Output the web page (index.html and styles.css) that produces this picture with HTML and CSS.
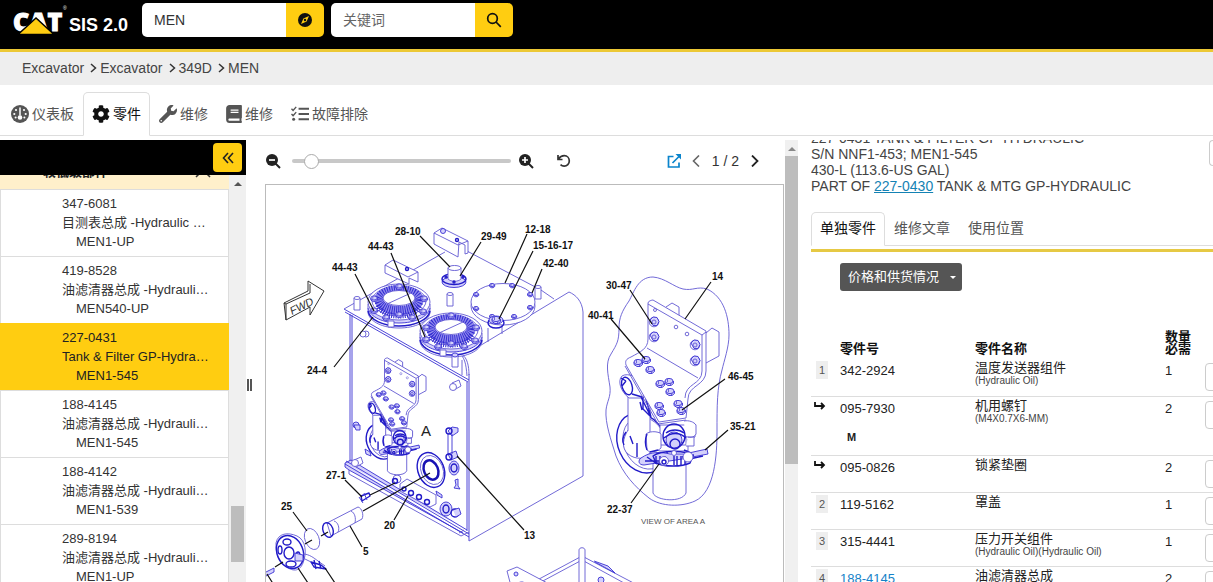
FILE: index.html
```html
<!DOCTYPE html>
<html lang="zh-CN">
<head>
<meta charset="utf-8">
<meta name="viewport" content="width=device-width, initial-scale=1">
<title>SIS 2.0</title>
<link rel="stylesheet" href="styles.css">
</head>
<body>
<header class="topbar">
  <a class="brand" href="#">
    <svg class="logo" viewBox="0 0 56 32" role="img" aria-label="CAT">
      <text class="logo-letters" x="0" y="27">CAT</text>
      <path d="M5 30.500 23 14 41 30.500Z" fill="#ffcd11" stroke="#000" stroke-width="1.500"/>
      <text class="reg" x="50" y="6">®</text>
    </svg>
    <span class="brand-name">SIS 2.0</span>
  </a>
  <form class="search">
    <input type="text" aria-label="序列号" value="MEN">
    <button type="button" aria-label="浏览"><svg width="16" height="16" viewBox="0 0 16 16"><circle cx="8" cy="8" r="7" fill="#111"/><path d="M12 4 9.600 9.600 4 12l2.400-5.600Z" fill="#ffcd11"/><circle cx="8" cy="8" r="1.200" fill="#111"/></svg></button>
  </form>
  <form class="search">
    <input type="text" aria-label="关键词" placeholder="关键词">
    <button type="button" aria-label="搜索"><svg width="16" height="16" viewBox="0 0 16 16" fill="none" stroke="#111" stroke-width="1.700"><circle cx="6.500" cy="6.500" r="4.800"/><path d="m10 10 4.800 4.800"/></svg></button>
  </form>
</header>

<nav class="crumbs" aria-label="路径">
  <a href="#">Excavator</a><svg class="sep" viewBox="0 0 7 10"><path d="m1 1 4.500 4L1 9"/></svg>
  <a href="#">Excavator</a><svg class="sep" viewBox="0 0 7 10"><path d="m1 1 4.500 4L1 9"/></svg>
  <a href="#">349D</a><svg class="sep" viewBox="0 0 7 10"><path d="m1 1 4.500 4L1 9"/></svg>
  <a href="#">MEN</a>
</nav>

<nav class="tabs main-tabs">
  <a class="tab" href="#"><svg width="18" height="18" viewBox="0 0 18 18"><circle cx="9" cy="9" r="9" fill="#555"/><path d="M9 2.500v8" stroke="#fff" stroke-width="1.500"/><circle cx="9" cy="12.500" r="2.300" fill="#fff"/><g fill="#fff"><circle cx="5" cy="5" r="1.100"/><circle cx="13" cy="5" r="1.100"/><circle cx="3.300" cy="9" r="1.100"/><circle cx="14.700" cy="9" r="1.100"/><circle cx="4.600" cy="12.500" r="1"/><circle cx="13.400" cy="12.500" r="1"/></g></svg>仪表板</a>
  <a class="tab active" href="#"><svg width="18" height="18" viewBox="0 0 512 512"><path fill="#111" d="M487.400 315.700l-42.600-24.600c4.300-23.200 4.300-47 0-70.200l42.600-24.600c4.900-2.800 7.100-8.600 5.500-14-11.100-35.600-30-67.800-54.700-94.600-3.800-4.100-10-5.100-14.800-2.300L380.800 110c-17.900-15.400-38.500-27.300-60.800-35.100V25.800c0-5.600-3.900-10.500-9.400-11.700-36.700-8.200-74.300-7.800-109.200 0-5.500 1.200-9.400 6.100-9.400 11.700V75c-22.200 7.900-42.800 19.800-60.800 35.100L88.700 85.500c-4.900-2.800-11-1.900-14.800 2.300-24.700 26.700-43.600 58.900-54.700 94.600-1.700 5.400.6 11.200 5.500 14L67.300 221c-4.300 23.200-4.300 47 0 70.200l-42.600 24.600c-4.900 2.800-7.100 8.600-5.500 14 11.100 35.600 30 67.800 54.700 94.600 3.800 4.100 10 5.100 14.800 2.300l42.600-24.600c17.900 15.400 38.500 27.300 60.800 35.100v49.200c0 5.600 3.900 10.500 9.400 11.700 36.700 8.200 74.300 7.800 109.200 0 5.500-1.200 9.400-6.100 9.400-11.700v-49.200c22.200-7.900 42.800-19.800 60.800-35.100l42.600 24.600c4.900 2.800 11 1.900 14.800-2.300 24.700-26.700 43.600-58.900 54.700-94.600 1.500-5.500-.7-11.300-5.600-14.100zM256 336c-44.100 0-80-35.900-80-80s35.900-80 80-80 80 35.900 80 80-35.900 80-80 80z"/></svg>零件</a>
  <a class="tab" href="#"><svg width="18" height="18" viewBox="0 0 512 512"><path fill="#555" d="M507.730 109.100c-2.240-9.030-13.540-12.090-20.120-5.510l-74.360 74.360-67.880-11.310-11.310-67.880 74.360-74.360c6.620-6.620 3.430-17.900-5.660-20.160-47.380-11.740-99.550.91-136.580 37.930-39.640 39.640-50.550 97.100-34.050 147.200L18.740 402.760c-24.990 24.990-24.990 65.510 0 90.500 24.990 24.990 65.510 24.990 90.500 0l213.210-213.210c50.120 16.710 107.470 5.680 147.370-34.220 37.070-37.070 49.700-89.320 37.910-136.730zM64 472c-13.250 0-24-10.750-24-24 0-13.260 10.750-24 24-24s24 10.740 24 24c0 13.250-10.750 24-24 24z"/></svg>维修</a>
  <a class="tab" href="#"><svg width="16" height="18" viewBox="0 0 448 512"><path fill="#555" d="M448 360V24c0-13.300-10.700-24-24-24H96C43 0 0 43 0 96v320c0 53 43 96 96 96h328c13.300 0 24-10.700 24-24v-16c0-7.500-3.500-14.300-8.900-18.700-4.200-15.400-4.200-59.300 0-74.700 5.400-4.300 8.900-11.100 8.900-18.600zM128 134c0-3.300 2.700-6 6-6h212c3.300 0 6 2.700 6 6v20c0 3.300-2.700 6-6 6H134c-3.300 0-6-2.700-6-6v-20zm0 64c0-3.300 2.700-6 6-6h212c3.300 0 6 2.700 6 6v20c0 3.300-2.700 6-6 6H134c-3.300 0-6-2.700-6-6v-20zm253.400 250H96c-17.700 0-32-14.300-32-32 0-17.600 14.400-32 32-32h285.400c-1.900 17.100-1.900 46.900 0 64z"/></svg>维修</a>
  <a class="tab" href="#"><svg width="18" height="18" viewBox="0 0 19 18" fill="none" stroke="#555"><path d="m.5 3.500 1.700 1.700L5.500 1.500M.5 9l1.700 1.700L5.500 7" stroke-width="1.500"/><path d="M8 3.500h11M8 9h11M8 14.500h11" stroke-width="2"/><circle cx="2.800" cy="14.500" r="1.600" fill="#555" stroke="none"/></svg>故障排除</a>
</nav>

<main class="workspace">
  <aside class="sidebar">
    <div class="sidebar-bar"><button type="button" aria-label="收起"><svg width="12" height="12" viewBox="0 0 12 12" fill="none" stroke="#222" stroke-width="1.600"><path d="M6 1 1.500 6 6 11M11 1 6.500 6l4.500 5"/></svg></button></div>
    <div class="scroller">
      <div class="list">
        <div class="group"><strong>较低级部件</strong><svg width="16" height="10" viewBox="0 0 16 10"><path d="m1 9 7-7 7 7" fill="none" stroke="#333" stroke-width="1.500"/></svg></div>
        <a class="item" href="#"><span>347-6081</span><span class="name">目测表总成 -Hydraulic …</span><span class="serial">MEN1-UP</span></a>
        <a class="item" href="#"><span>419-8528</span><span class="name">油滤清器总成 -Hydrauli…</span><span class="serial">MEN540-UP</span></a>
        <a class="item selected" href="#"><span>227-0431</span><span class="name">Tank &amp; Filter GP-Hydra…</span><span class="serial">MEN1-545</span></a>
        <a class="item" href="#"><span>188-4145</span><span class="name">油滤清器总成 -Hydrauli…</span><span class="serial">MEN1-545</span></a>
        <a class="item" href="#"><span>188-4142</span><span class="name">油滤清器总成 -Hydrauli…</span><span class="serial">MEN1-539</span></a>
        <a class="item" href="#"><span>289-8194</span><span class="name">油滤清器总成 -Hydrauli…</span><span class="serial">MEN1-UP</span></a>
      </div>
      <div class="scrollbar side-scroll"><i class="arrow"></i><i class="thumb"></i></div>
    </div>
  </aside>
  <div class="splitter"></div>

  <section class="viewer">
    <div class="viewer-body">
      <div class="toolbar">
        <button type="button" aria-label="缩小"><svg width="15" height="15" viewBox="0 0 15 15"><circle cx="6" cy="6" r="6" fill="#222"/><path d="m9.500 9.500 4.500 4.500" stroke="#222" stroke-width="2"/><path d="M3 6h6" stroke="#fff" stroke-width="1.700"/></svg></button>
        <input class="zoom" type="range" min="0" max="100" value="6" aria-label="缩放">
        <button type="button" aria-label="放大"><svg width="15" height="15" viewBox="0 0 15 15"><circle cx="6" cy="6" r="6" fill="#222"/><path d="m9.500 9.500 4.500 4.500" stroke="#222" stroke-width="2"/><path d="M3 6h6M6 3v6" stroke="#fff" stroke-width="1.700"/></svg></button>
        <button class="reset" type="button" aria-label="重置"><svg width="15" height="14" viewBox="0 0 15 14" fill="none" stroke="#333" stroke-width="1.700"><path d="M2 1v4.500h4.500M2.500 5C4 2.700 6 1.700 8.300 1.700c3 0 5 2.400 5 5.300s-2.300 5.200-5.100 5.200c-1.500 0-2.700-.5-3.700-1.500"/></svg></button>
        <div class="pager">
          <button type="button" aria-label="新窗口"><svg width="15" height="15" viewBox="0 0 15 15" fill="none" stroke="#0a84cc" stroke-width="1.700"><path d="M6.500 2.500H1.500v10.500h10.500V8.500M5.500 9 12 2.500"/><path d="M8.500 0H14v5.500Z" fill="#0a84cc" stroke="none"/></svg></button>
          <button type="button" aria-label="上一页"><svg width="8" height="12" viewBox="0 0 8 12" fill="none" stroke="#666" stroke-width="1.600"><path d="M7 .5 1.500 6 7 11.500"/></svg></button>
          <span class="count">1 / 2</span>
          <button type="button" aria-label="下一页"><svg width="8" height="12" viewBox="0 0 8 12" fill="none" stroke="#222" stroke-width="1.800"><path d="M1 .5 6.500 6 1 11.500"/></svg></button>
        </div>
      </div>
      <div class="canvas">
        <svg class="drawing" viewBox="266 185 517 397" role="img" aria-label="Tank &amp; Filter GP-Hydraulic">
          <defs>
            <g id="bolt"><path d="M-4 0v2.500l3 2h3l2.500-2V0" class="b"/><ellipse rx="4" ry="2.600" class="b"/><path d="M-1.500-2.500V1M1.500 2v2" class="l"/></g>
            <g id="nut"><circle r="4.800" class="f"/><path d="m-4-2 3-3 4 .5 2 4-2 4h-4Z" class="b"/><circle r="2" class="l"/></g>
            <g id="cap">
              <path d="M-31 2v9c2 9 15 15 31 15s29-6 31-15V2" class="f"/>
              <path d="M-31 9c2 9 15 15 31 15S29 18 31 9" class="k"/>
              <path d="M-31 6c2 9 15 15 31 15S29 15 31 6" class="b"/>
              <ellipse rx="31" ry="18" class="f"/>
              <ellipse cy="-1" rx="27" ry="15" class="l"/>
              <ellipse cy="-2" rx="20" ry="10.500" fill="none" stroke="#8f89ec" stroke-width="9"/>
              <ellipse cy="-2" rx="20" ry="10.500" fill="none" stroke="#3029d0" stroke-width="9" stroke-dasharray=".9 1.300"/>
              <path d="M-21 3c3 8 11 11 21 11S18 11 21 3" fill="none" stroke="#3029d0" stroke-width="5" stroke-dasharray="1 1.200"/>
              <ellipse cy="-4" rx="16" ry="7.500" class="f"/><path d="M-12 2C-4-2 4-5 12-9" class="l"/>
              <use href="#bolt" transform="translate(0 -16) scale(.8)"/><use href="#bolt" transform="translate(25 -4) scale(.8)"/><use href="#bolt" transform="translate(-25 -4) scale(.8)"/><use href="#bolt" transform="translate(-25 8) scale(.8)"/><use href="#bolt" transform="translate(24 9) scale(.8)"/><use href="#bolt" transform="translate(-13 15) scale(.8)"/><use href="#bolt" transform="translate(13 15) scale(.8)"/><use href="#bolt" transform="translate(0 12) scale(.8)"/>
              <path d="M-11 19h6v6h-6Z" class="f"/>
            </g>
            <g id="pump">
              <ellipse cx="642" cy="443" rx="24" ry="31" transform="rotate(-24 642 443)" class="k"/>
              <ellipse cx="645" cy="443" rx="21" ry="27" transform="rotate(-24 645 443)" class="f"/>
              <path d="M628 390v54c0 12 20 14 22 0V392" class="f"/>
              <path d="M622 376c6-4 18 2 23 8l-2 14-14 0c-8-6-12-17-7-22Z" class="f"/>
              <ellipse cx="627" cy="386" rx="5" ry="9" transform="rotate(-18 627 386)" class="k"/><path d="m621 378 5 3M622 386l4-5M632 394l10 3M641 397l10 20M643 397v12l7 7M646 399l5 18M640 402l2 8" class="k"/>
              <path d="M628 430c-5 8-7 18 0 24s20 6 22-2" class="f"/><path d="M626 432c-3 4-4 9-2 13M637 457V443M630 436l3 8" class="k"/>
              <path d="M653 455v38c3 8 29 10 33 0v-38" class="f"/>
              <path d="M648 433h40v-10l7 1v13l-7 2v12h-28l-12-4Z" class="f"/>
              <path d="M660 425h26v20h-26z" class="f"/>
              <path d="M646 434c5-4 14-2 15 0v14c-4 4-11 5-14 2Z" class="f"/><path d="M647 434c-2 5-2 11 0 16" class="k"/>
              <path d="M684 421c5-1 10 1 12 4v9c-2 4-7 4-11 2M688 437h6v9h-8" class="f"/>
              <path d="M641 458c10-7 20-6 29-4l14 0 23-5 1 5-26 5-38 6c-6 0-6-5-3-7Z" class="b"/>
              <path d="M653 456c8-6 34-6 40 0l-3 7c-8 4-26 4-34 0Z" class="k"/><path d="M656 456v8m4-8v9m5-9v9m9-9v9m3-9v9m4-9v9m4-9v8m3-8v6m-43-1h14m-12-4 10 7m25-7 12-2m-9 5 18-4M650 452l8-2M684 450l7 3" class="k"/>
              <ellipse cx="674" cy="436" rx="11" ry="12" class="k"/><ellipse cx="674" cy="440" rx="8" ry="8" class="b"/><ellipse cx="675" cy="444" rx="5" ry="5" class="k"/><path d="M666 433c5-4 13-4 18 0M664 438c7-6 16-6 22 0" class="k"/>
              <circle cx="664" cy="461" r="4.500" class="f"/><circle cx="664" cy="462" r="2" class="k"/><circle cx="688" cy="457" r="5" class="f"/><circle cx="674" cy="453" r="2.500" class="f"/>
              <path d="m666 307 6-4 7 4v11M706 333l6-5 7 4v24l-13 7" class="f"/>
              <path d="M648 303c0-2 4-3 5-3l53 31v40c0 15-18 14-18 28l-2 19-27 4-33-57c-1-4 0-6 5-8 9-5 17-8 17-18Z" class="f"/>
              <path d="m648 304 54 31v36c0 14-17 12-17 27M625 366l33 58 28-4M647 348l51 30M702 335l4-3" class="l"/>
              <g class="l"><circle cx="655" cy="310" r="1.500"/><circle cx="676" cy="327" r="1.800"/><circle cx="687" cy="334" r="1.800"/></g>
              <use href="#nut" x="654" y="322"/><use href="#nut" x="654" y="337"/><use href="#nut" x="695" y="345"/><use href="#nut" x="695" y="361"/>
              <use href="#bolt" x="638" y="362"/><use href="#bolt" x="646" y="359"/><use href="#bolt" x="650" y="369"/><use href="#bolt" x="660" y="383"/><use href="#bolt" x="669" y="381"/><use href="#bolt" x="670" y="391"/><use href="#bolt" x="659" y="405"/><use href="#bolt" x="661" y="412"/><use href="#bolt" x="678" y="403"/><use href="#bolt" x="681" y="410"/>
            </g>
          </defs>

          <g class="art">
            <path class="b" d="m344 309 125 71M345 312l123 70M350 314v149M352 315v149M469 374v167M467 382v149"/>
            <path class="l" d="m344 309 101-57M467 251l74 39 13 9M463 356l106-64c7 3 13 9 14 20v164l-114 65M462 355c5 2 7 11 7 20M457 352c8 4 9 12 10 24M462 375v-15M488 328v14M502 322v12"/>
            <path class="b" d="m345 463 6-3 116 70M345 463v4l4 3 114 63M345 464l124 73M346 461l123 73"/><path class="l" d="M349 470v4l112 62 8-4M459 533l5-3"/>
            <path class="f" d="m434 233 8-5 26 13v12l-3 1v-9l-6-3-1 15-24-13Z"/><path class="l" d="m434 233 24 12 10-4"/><circle cx="443" cy="231" r="2.500" class="b"/><circle cx="457" cy="240" r="1.500" class="k"/>
            <path class="f" d="m385 265 8-5 25 12v10l-9-4v6l-24-11Z"/><path class="l" d="m385 265 23 12 10-5"/><circle cx="407" cy="269" r="1.500" class="k"/>
            <ellipse cx="503" cy="306" rx="32" ry="19" class="f"/><ellipse cx="503" cy="302" rx="32" ry="18.500" class="f"/>
            <g><use href="#bolt" transform="translate(492 285) scale(.6)"/><use href="#bolt" transform="translate(476 294) scale(.6)"/><use href="#bolt" transform="translate(476 308) scale(.6)"/><use href="#bolt" transform="translate(492 316) scale(.6)"/><use href="#bolt" transform="translate(514 316) scale(.6)"/><use href="#bolt" transform="translate(530 307) scale(.6)"/><use href="#bolt" transform="translate(530 294) scale(.6)"/><use href="#bolt" transform="translate(512 285) scale(.6)"/></g>
            <ellipse cx="496" cy="323" rx="8" ry="5" class="k"/><ellipse cx="496" cy="320" rx="7" ry="4" class="b"/><use href="#bolt" x="496" y="319"/>
            <ellipse cx="454" cy="282" rx="12" ry="5.500" class="b"/><ellipse cx="454" cy="279" rx="12" ry="5.500" class="k"/><path class="f" d="M448 268v11c3 3 10 3 13 0v-11"/><ellipse cx="454.500" cy="268" rx="6.500" ry="2.500" class="f"/>
            <g class="k"><circle cx="446" cy="277" r="1"/><circle cx="463" cy="277" r="1"/><circle cx="454" cy="282" r="1"/></g>
            <g class="f"><path d="M354 298v12h6v-12M447 294v12h6v-12M535 287v12h6v-12"/><ellipse cx="357" cy="298" rx="3" ry="1.500"/><ellipse cx="450" cy="294" rx="3" ry="1.500"/><ellipse cx="538" cy="287" rx="3" ry="1.500"/></g>
            <use href="#cap" x="399" y="302"/><use href="#cap" x="451" y="331"/>
            <path class="f" d="M452 355v12h6v-12"/><ellipse cx="455" cy="355" rx="3" ry="2" class="b"/>
            <g class="f"><circle cx="366" cy="334" r="3"/><circle cx="363" cy="334" r="3"/><path d="m452 383 7-3 2 6-7 4Z"/><circle cx="453" cy="387" r="3.500"/><path d="m354 460 7-3 2 6-7 4Z"/><circle cx="355" cy="463" r="3.500"/></g>
            <g class="b"><circle cx="356" cy="425" r="3"/><path d="M354 425h6v5h-4ZM365 449l5 3 1 4-5-2Z"/></g>
            <path class="b" d="m448 431 4-4 6 1v4l-6 4ZM448 434v20M452 434v20M448 454l8-3 2 6-7 3Z"/><circle cx="449" cy="431" r="3" class="k"/><circle cx="449" cy="457" r="3" class="k"/>
            <ellipse cx="454" cy="468" rx="5" ry="7" class="b"/><ellipse cx="454" cy="468" rx="3" ry="4" class="k"/>
            <path class="b" d="m455 480 3-1v7l2 3-6-1 2-3Z"/>
            <ellipse cx="446" cy="509" rx="6" ry="7" class="b"/><ellipse cx="446" cy="509" rx="3" ry="4" class="k"/><circle cx="455" cy="513" r="4" class="k"/><path class="b" d="m453 510 6-2 2 6-5 3"/>
            <ellipse cx="431" cy="470" rx="13" ry="18" transform="rotate(-22 431 470)" class="k"/><ellipse cx="432" cy="470" rx="11" ry="15" transform="rotate(-22 432 470)" class="l"/><ellipse cx="431" cy="470" rx="7" ry="10" transform="rotate(-22 431 470)" fill="#fff" stroke="#1711b4" stroke-width="2.500"/>
            <path class="f" d="m400 484 7-5 29 16v9l-6 3-30-16Z"/><g class="k"><circle cx="404" cy="489" r="2"/><circle cx="411" cy="493" r="2.500"/><circle cx="419" cy="497" r="2.500"/><circle cx="427" cy="502" r="2.500"/></g><path class="b" d="m436 491 6 4v3l-5-3Z"/>
            <circle cx="397" cy="479" r="4" class="f"/><circle cx="395" cy="481" r="2.500" class="k"/>
            <use href="#pump" transform="translate(5.420 182.415) scale(.585)"/>
            <path class="k" d="m361 496 8-3 1 3-8 5Z"/><path class="b" d="m359 497 4 6M364 493l3 7"/>
            <path class="f" d="m327 523 31-16c4 1 6 8 4 12l-31 17Z"/><ellipse cx="328" cy="530" rx="5" ry="7.500" transform="rotate(-20 328 530)" class="k"/><path class="l" d="M334 521c4 1 6 7 4 11M351 511c4 2 5 7 4 12"/>
            <ellipse cx="312" cy="539" rx="7" ry="11" transform="rotate(-22 312 539)" class="f"/>
            <path class="f" d="M276 543c2-10 12-11 21-7s10 17 6 27-11 7-15 5-13-10-12-25Z"/><ellipse cx="290" cy="552" rx="13" ry="17" transform="rotate(-22 290 552)" class="k"/><g class="k"><ellipse cx="289" cy="553" rx="5" ry="6"/><ellipse cx="287" cy="542" rx="4" ry="3"/><ellipse cx="280" cy="550" rx="2" ry="4"/><ellipse cx="291" cy="564" rx="5" ry="3"/><ellipse cx="298" cy="556" rx="2" ry="4"/></g><path class="b" d="M295 553l8 2v6h-8Z"/>
            <path class="l" d="M303 554c6 0 11 4 15 7l7 5M303 558l8 4"/><path class="k" d="m311 562 10 3 5 4-12-2ZM314 560l2 9M319 561l2 8"/>
            <path class="l" d="M653 277c12 1 21 10 30 12 10 2 14-3 24 0 17 8 22 28 22 46 0 12-5 26-7 35-5 18-5 35-5 62 0 22-2 60-22 69-13 6-34 6-46-3-14-11-26-24-33-42-5-16-11-33-10-46 1-9 5-13 4-23-2-13-5-24 1-33 6-10 8-13 8-26 0-10 3-17 10-27 5-9 9-24 24-24Z"/>
            <use href="#pump"/>
            <path class="l" d="M500 600 582 556l84 44M500 604l82-44 84 46"/><path class="f" d="M579 590v-40c0-3 6-3 6 0v40"/><path class="b" d="m594 561 14 5 7 7-20-11"/><circle cx="601" cy="580" r="3" class="b"/>
            <path class="f" d="m507 571 10-4 36 19-8 8-22-12c-5-1-6 4-12 4Z"/><circle cx="516" cy="574" r="2" class="b"/><path class="b" d="m266 572 8-4v4l-8 4"/>
            <path class="fwd" d="m284 303 24-12v-10l16 10-14 24v-8l-24 13ZM284 303l2 1v16M286 304l24-11v-9"/>
          </g>

          <g class="leaders">
            <path d="m420 236 30 31M391 253l34 84M355 274l19 37M481 242l-21 34M527 234l-22 49M533 251l-34 68M542 269l-10 24M334 367l39-50M630 290l22 34M711 282l-26 37M611 319l34 40M725 379l-43 31M728 430l-23 20M631 503l28-39M524 530l-67-74M394 520l14-24M362 547l-12-21M293 512l14 19M345 480l17 17M370 495l25-12M363 511l67-38M305 544l7-4M321 536l7-4M275 567l8-5M298 568l20 30M325 568l16 24M267 574l10 16"/>
          </g>
          <g class="labels">
            <text x="395" y="235">28-10</text><text x="368" y="250">44-43</text><text x="332" y="271">44-43</text><text x="481" y="240">29-49</text><text x="525" y="233">12-18</text><text x="533" y="249">15-16-17</text><text x="543" y="267">42-40</text><text x="606" y="289">30-47</text><text x="712" y="280">14</text><text x="588" y="319">40-41</text><text x="728" y="380">46-45</text><text x="730" y="430">35-21</text><text x="607" y="513">22-37</text><text x="524" y="539">13</text><text x="384" y="529">20</text><text x="363" y="555">5</text><text x="281" y="510">25</text><text x="326" y="479">27-1</text><text x="307" y="374">24-4</text>
          </g>
          <text class="fwd-text" x="292" y="315" transform="rotate(-26 292 315)">FWD</text>
          <text class="area" x="421" y="436">A</text>
          <text class="caption" x="641" y="524">VIEW OF AREA A</text>
        </svg>
      </div>
    </div>
    <div class="scrollbar view-scroll"><i class="arrow"></i><i class="thumb"></i></div>
  </section>

  <section class="details">
    <div class="summary">
      <div class="summary-text">
        <p>227-0431 TANK &amp; FILTER GP-HYDRAULIC</p>
        <p>S/N NNF1-453; MEN1-545</p>
        <p>430-L (113.6-US GAL)</p>
        <p>PART OF <a href="#">227-0430</a> TANK &amp; MTG GP-HYDRAULIC</p>
      </div>
      <button class="more" type="button" aria-label="更多"></button>
    </div>
    <nav class="tabs detail-tabs">
      <a class="tab active" href="#">单独零件</a>
      <a class="tab" href="#">维修文章</a>
      <a class="tab" href="#">使用位置</a>
    </nav>
    <div class="parts">
      <button class="price" type="button">价格和供货情况<i class="caret"></i></button>
      <table>
        <colgroup><col class="c-ref"><col class="c-num"><col><col class="c-qty"><col class="c-in"></colgroup>
        <thead><tr><th></th><th>零件号</th><th>零件名称</th><th class="qty">数量<br>必需</th><th></th></tr></thead>
        <tbody>
          <tr><td><span class="ref">1</span></td><td>342-2924</td><td class="part">温度发送器组件<small>(Hydraulic Oil)</small></td><td>1</td><td><input type="text" aria-label="数量 342-2924"></td></tr>
          <tr><td><svg class="sub" viewBox="0 0 12 10"><path d="M1 1v4h8M7 2l3 3-3 3"/></svg></td><td>095-7930<b class="metric">M</b></td><td class="part">机用螺钉<small>(M4X0.7X6-MM)</small></td><td>2</td><td><input type="text" aria-label="数量 095-7930"></td></tr>
          <tr><td><svg class="sub" viewBox="0 0 12 10"><path d="M1 1v4h8M7 2l3 3-3 3"/></svg></td><td>095-0826</td><td class="part">锁紧垫圈</td><td>2</td><td><input type="text" aria-label="数量 095-0826"></td></tr>
          <tr><td><span class="ref">2</span></td><td>119-5162</td><td class="part">罩盖</td><td>1</td><td><input type="text" aria-label="数量 119-5162"></td></tr>
          <tr><td><span class="ref">3</span></td><td>315-4441</td><td class="part">压力开关组件<small>(Hydraulic Oil)(Hydraulic Oil)</small></td><td>1</td><td><input type="text" aria-label="数量 315-4441"></td></tr>
          <tr><td><span class="ref">4</span></td><td><a href="#">188-4145</a></td><td class="part">油滤清器总成</td><td>2</td><td><input type="text" aria-label="数量 188-4145"></td></tr>
        </tbody>
      </table>
    </div>
  </section>
</main>
</body>
</html>
```
FILE: styles.css
```css
* { box-sizing: border-box; }
body {
  margin: 0;
  height: 100vh;
  display: flex;
  flex-direction: column;
  overflow: hidden;
  background: #fff;
  color: #333;
  font: 14px/20px "Liberation Sans", "Noto Sans CJK SC", sans-serif;
}
a { color: inherit; text-decoration: none; }
button, input { font: inherit; color: inherit; }
button { border: 0; padding: 0; background: none; display: flex; align-items: center; justify-content: center; }
svg { display: block; flex: none; }
p { margin: 0; }

.topbar {
  display: flex;
  align-items: flex-start;
  padding: 3px 0 12px 13px;
  background: #000;
  border-bottom: 3px solid #ecc835;
}
.brand { display: flex; align-items: center; width: 129px; height: 34px; color: #fff; }
.logo { width: 56px; height: 32px; overflow: visible; }
.logo-letters { font: 800 25px "Open Sans", "Liberation Sans", sans-serif; fill: #fff; stroke: #fff; stroke-width: 1; }
.reg { font-size: 5px; fill: #fff; }
.brand-name { font-size: 18px; font-weight: bold; padding-top: 10px; white-space: nowrap; }
.search { display: flex; width: 182px; height: 34px; margin-right: 7px; border-radius: 5px; overflow: hidden; }
.search input { flex: 1; min-width: 0; border: 0; padding: 0 12px; background: #fff; }
.search input::placeholder { color: #666; opacity: 1; }
.search button { width: 38px; background: #ffcd11; }

.crumbs { display: flex; align-items: center; padding: 6px 22px 7px; background: #eee; color: #444; }
.sep { width: 7px; height: 10px; margin: 0 3px 0 6px; fill: none; stroke: #333; stroke-width: 1.5; }

.tabs { display: flex; border-bottom: 1px solid #ddd; }
.tab {
  display: flex;
  align-items: center;
  gap: 3px;
  padding: 0 8px;
  margin-bottom: -1px;
  border: 1px solid transparent;
  border-radius: 5px 5px 0 0;
  color: #555;
  white-space: nowrap;
}
.tab.active { background: #fff; border-color: #ddd #ddd #fff; color: #111; }
.main-tabs { padding: 7px 2px 0; }
.main-tabs .tab { height: 44px; }

.workspace {
  flex: 1;
  min-height: 0;
  display: grid;
  grid-template-columns: 246px 8px minmax(0, 544fr) minmax(0, 415fr);
  padding-top: 4px;
}

.sidebar { display: flex; flex-direction: column; min-height: 0; overflow: hidden; }
.sidebar-bar { display: flex; justify-content: flex-end; padding: 3px 4px; background: #000; }
.sidebar-bar button { width: 29px; height: 29px; border-radius: 4px; background: #ffcd11; }
.scroller { flex: 1; min-height: 0; display: flex; }
.list { flex: 1; min-width: 0; overflow: hidden; font-size: 13px; }
.group {
  display: flex;
  align-items: flex-end;
  justify-content: space-between;
  height: 14px;
  padding: 0 18px 7px 43px;
  overflow: hidden;
  background: #fff0cb;
  color: #222;
  line-height: 20px;
}
.group svg { margin-bottom: 4px; }
.item {
  display: flex;
  flex-direction: column;
  padding: 4px 20px 5px 61px;
  border: solid #ddd;
  border-width: 1px 1px 0;
  line-height: 19px;
}
.item .name { overflow: hidden; white-space: nowrap; }
.item .serial { padding-left: 14px; }
.item.selected { background: #ffcd11; border-color: #ffcd11; color: #222; }

.scrollbar { display: flex; flex-direction: column; align-items: center; background: #f0f0f0; }
.scrollbar .thumb { width: 13px; background: #bdbdbd; }
.arrow { border: 4px solid transparent; border-top: 0; border-bottom: 4px solid #555; margin: 7px 0 5px; }
.side-scroll { width: 17px; }
.side-scroll::before { content: ""; order: 1; flex: 315; }
.side-scroll .thumb { order: 2; flex: 56; }
.side-scroll::after { content: ""; order: 3; flex: 20; }

.splitter { align-self: center; width: 5px; height: 12px; margin-top: 48px; margin-left: 1px; border: solid #555; border-width: 0 2px; }

.viewer { display: flex; min-height: 0; }
.viewer-body { flex: 1; min-width: 0; display: flex; flex-direction: column; padding: 0 1px 0 11px; }
.toolbar { display: flex; align-items: center; height: 44px; flex: none; padding: 0 25px 2px 1px; }
.zoom { appearance: none; flex: 0 1 219px; min-width: 60px; height: 16px; margin: 0 8px 0 11px; background: none; }
.zoom::-webkit-slider-runnable-track { height: 4px; border-radius: 2px; background: #c8c8c8; }
.zoom::-webkit-slider-thumb { appearance: none; width: 15px; height: 15px; margin-top: -5px; border: 1px solid #aaa; border-radius: 50%; background: #fff; }
.reset { margin-left: 22px; }
.pager { display: flex; align-items: center; gap: 10px; margin-left: auto; }
.count { padding: 0 2px; white-space: nowrap; }
.canvas { flex: 1; min-height: 0; overflow: hidden; border: solid #bbb; border-width: 1px 1px 0; }
.drawing { width: 100%; }
.view-scroll { width: 13px; }
.view-scroll .arrow { border-bottom-color: #888; }
.view-scroll .thumb { flex: 308; }
.view-scroll::after { content: ""; flex: 118; }

.l, .b, .k, .f { stroke: #6259d2; stroke-width: 0.9; fill: none; stroke-linejoin: round; vector-effect: non-scaling-stroke; }
.f { fill: #fff; }
.b { fill: #d4d1fb; stroke: #3a31d4; }
.k { stroke: #221bc8; stroke-width: 1.4; }
.fwd { fill: #fff; stroke: #333; stroke-width: 1; }
.leaders { fill: none; stroke: #111; stroke-width: 1.2; }
.labels { font-size: 10px; font-weight: bold; fill: #111; }
.fwd-text { font-size: 11px; font-style: italic; fill: #333; }
.area { font-size: 15px; fill: #222; }
.caption { font-size: 8px; fill: #555; }

.details { min-width: 0; padding-left: 13px; overflow: hidden; }
.summary { display: flex; justify-content: space-between; height: 72px; overflow: hidden; color: #444; line-height: 16px; }
.summary-text { margin-top: -10px; white-space: nowrap; }
.summary a { color: #1482b4; text-decoration: underline; }
.more { width: 4px; height: 26px; border: 1px solid #ccc; border-right: 0; border-radius: 4px 0 0 4px; }
.detail-tabs .tab { height: 34px; padding-bottom: 2px; }
.detail-tabs + .parts { margin-top: 3px; border-top: 3px solid #e6c944; }
.parts { padding-top: 11px; }
.price { height: 28px; margin-left: 29px; padding: 0 6px 0 8px; gap: 11px; border-radius: 3px; background: #555; color: #fff; font-size: 13px; }
.caret { border: 3px solid transparent; border-top-color: #fff; border-bottom: 0; }
table { width: calc(100% + 32px); table-layout: fixed; border-collapse: collapse; font-size: 13px; color: #222; }
.c-ref { width: 29px; }
.c-num { width: 135px; }
.c-qty { width: 40px; }
.c-in { width: 40px; }
th { height: 68px; padding: 0; text-align: left; vertical-align: bottom; line-height: 20px; color: #111; }
th.qty { line-height: 12px; padding-bottom: 4px; }
td { height: 37px; padding: 2px 0 0; vertical-align: top; border-bottom: 1px solid #ddd; }
td a { color: #1482c8; }
.part { line-height: 16px; padding-top: 1px; }
.part small { display: block; font-size: 10px; line-height: 10px; color: #444; }
.ref { display: block; width: 12px; height: 18px; margin-left: 5px; background: #eee; text-align: center; font-size: 11px; line-height: 18px; color: #555; }
.sub { width: 12px; height: 10px; margin: 2px 0 0 3px; fill: none; stroke: #111; stroke-width: 1.8; }
.metric { display: block; padding: 8px 0 8px 7px; font-size: 11px; }
td input { display: block; width: 40px; height: 28px; margin: 2px 0 4px; border: 1px solid #ccc; border-radius: 4px; background: #fff; }
```
